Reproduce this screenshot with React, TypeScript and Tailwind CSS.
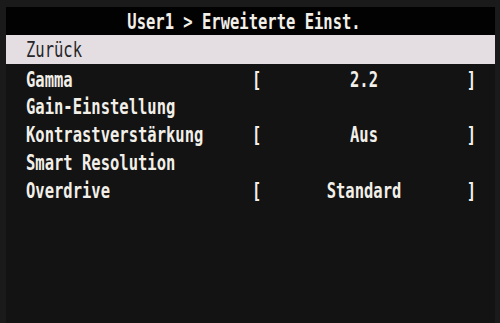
/**
 * OSD menu - "Erweiterte Einst." submenu of a monitor's on-screen display
 */

const rows: { label: string; value?: string; active?: boolean }[] = [
  { label: 'Zurück', active: true },
  { label: 'Gamma', value: '2.2' },
  { label: 'Gain-Einstellung' },
  { label: 'Kontrastverstärkung', value: 'Aus' },
  { label: 'Smart Resolution' },
  { label: 'Overdrive', value: 'Standard' },
];

function OsdText({ children }: { children: React.ReactNode }) {
  // OSD glyphs are tall and narrow, so stretch the mono font vertically
  return <span className="inline-block scale-y-[1.38] whitespace-pre">{children}</span>;
}

export default function App() {
  return (
    <div
      className="w-[500px] h-[323px] bg-[#1a1a1a] pt-[7px] pl-[6px] pr-[5px] flex flex-col overflow-hidden text-[15.5px] font-bold leading-none text-[#f2efe9]"
      style={{ fontFamily: '"DejaVu Sans Mono", "Liberation Mono", monospace' }}
    >
      <div className="flex-1 flex flex-col bg-[#131313]">
        {/* Title bar */}
        <div className="h-[28px] bg-[#020202] flex items-center justify-center pr-[13px] pt-[3px]">
          <OsdText>User1 &gt; Erweiterte Einst.</OsdText>
        </div>

        <div className="flex flex-col">
          {rows.map((row, i) => (
            <div
              key={row.label}
              className={`flex items-center pl-[20px] ${
                row.active
                  ? 'h-[29px] pt-[3px] bg-[#e4dde1] text-[#26262a] font-normal'
                  : i === 1
                    ? 'h-[28px] pt-[5px]'
                    : 'h-[28px] pt-[3px]'
              }`}
            >
              <div className="w-[226px]">
                <OsdText>{row.label}</OsdText>
              </div>
              {row.value && (
                <div className="w-[224px] flex items-center">
                  <OsdText>[</OsdText>
                  <div className="flex-1 text-center">
                    <OsdText>{row.value}</OsdText>
                  </div>
                  <OsdText>]</OsdText>
                </div>
              )}
            </div>
          ))}
        </div>
      </div>
    </div>
  );
}
